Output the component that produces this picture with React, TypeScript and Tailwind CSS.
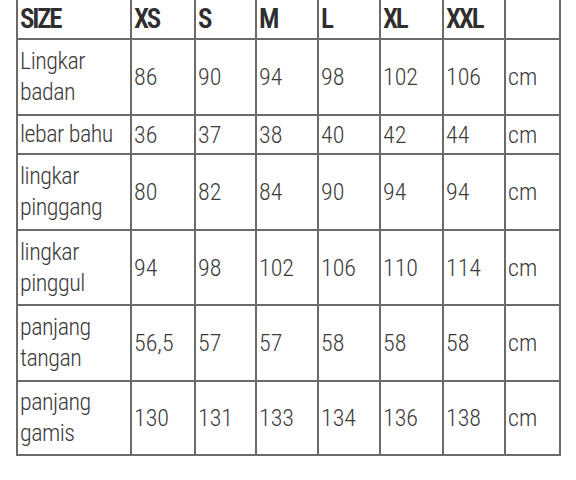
const header = ["SIZE", "XS", "S", "M", "L", "XL", "XXL", ""];

const rows: Array<{ label: [string, string?]; values: string[]; h: string }> = [
  { label: ["Lingkar", "badan"], values: ["86", "90", "94", "98", "102", "106"], h: "h-[74px]" },
  { label: ["lebar bahu"], values: ["36", "37", "38", "40", "42", "44"], h: "h-[37px]" },
  { label: ["lingkar", "pinggang"], values: ["80", "82", "84", "90", "94", "94"], h: "h-[74px]" },
  { label: ["lingkar", "pinggul"], values: ["94", "98", "102", "106", "110", "114"], h: "h-[73px]" },
  { label: ["panjang", "tangan"], values: ["56,5", "57", "57", "58", "58", "58"], h: "h-[74px]" },
  { label: ["panjang", "gamis"], values: ["130", "131", "133", "134", "136", "138"], h: "h-[72px]" },
];

export default function App() {
  return (
    <div className="w-[576px] h-[480px] bg-white overflow-hidden text-[#3b3b3b] font-['Roboto_Condensed','Roboto',sans-serif] font-light font-stretch-condensed">
      <div className="ml-[16px] mt-[-2px] w-[545px] grid grid-cols-[112px_62px_59px_60px_60px_61px_60px_53px] gap-[2px] p-[2px] bg-[#6b6b6b]">
        {/* header */}
        {header.map((h, i) => (
          <div
            key={"h" + i}
            className="h-[38px] bg-white flex items-center pl-[2px] text-[27px] font-semibold tracking-[-2.2px] text-[#2e2e2e]"
          >
            {h}
          </div>
        ))}

        {rows.map((r, ri) => (
          <>
            <div
              key={"l" + ri}
              className={`${r.h} bg-white flex flex-col justify-center pl-[2px] text-[24px] leading-[31px] whitespace-nowrap tracking-[-0.5px]`}
            >
              <span>{r.label[0]}</span>
              {r.label[1] && <span>{r.label[1]}</span>}
            </div>
            {r.values.map((v, vi) => (
              <div key={"v" + ri + vi} className={`${r.h} bg-white flex items-center pl-[2px] text-[24px]`}>
                {v}
              </div>
            ))}
            <div key={"c" + ri} className={`${r.h} bg-white flex items-center pl-[2px] text-[24px]`}>
              cm
            </div>
          </>
        ))}
      </div>
    </div>
  );
}
